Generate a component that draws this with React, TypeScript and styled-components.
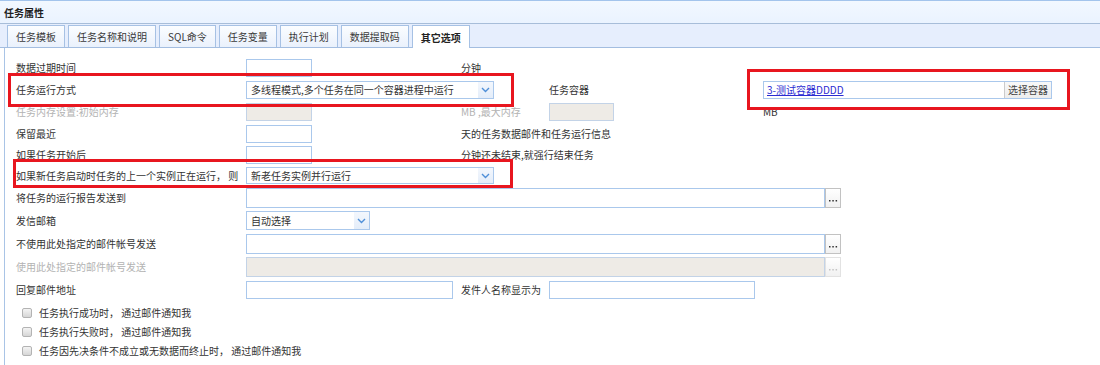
import React from 'react'
import styled, { createGlobalStyle } from 'styled-components'

const GlobalStyle = createGlobalStyle`
  html, body {
    margin: 0;
    padding: 0;
    background: #fff;
  }
  body {
    font-family: "Noto Sans CJK SC", "Noto Sans", sans-serif;
    font-size: 10px;
    color: #333;
  }
`

const tabs = ['任务模板', '任务名称和说明', 'SQL命令', '任务变量', '执行计划', '数据提取码', '其它选项']

const Panel = styled.div`
    position: relative;
    width: 1100px;
    height: 365px;
    overflow: hidden;
`

const Header = styled.div`
    height: 22px;
    border-top: 1px solid #a3c4ec;
    border-bottom: 1px solid #a7bdd9;
    background: linear-gradient(#f2f8ff, #eaf3ff);
    display: flex;
    align-items: center;
    padding-left: 4px;
    font-weight: bold;
    color: #1f1f1f;
`

const TabStrip = styled.div`
    display: flex;
    align-items: flex-start;
    gap: 3px;
    height: 22px;
    padding: 1px 0 0 7px;
    background: #e6eefd;
    border-bottom: 1px solid #a3bde0;
`

const Tab = styled.div<{ $active?: boolean }>`
    box-sizing: border-box;
    height: ${p => (p.$active ? 23 : 22)}px;
    padding: 0 8px;
    display: flex;
    align-items: center;
    border: 1px solid #a6c1e4;
    border-bottom: none;
    background: ${p => (p.$active ? '#fff' : 'linear-gradient(#fbfdff, #eaf1fc)')};
    font-weight: ${p => (p.$active ? 'bold' : 'normal')};
    color: ${p => (p.$active ? '#222' : '#3a3a3a')};
    white-space: nowrap;
`

const Content = styled.div`
    margin-left: 4px;
    border-left: 1px solid #a9c4e6;
    padding: 9px 0 0 11px;
    height: 308px;
`

const FormRow = styled.div<{ $h: number }>`
    display: grid;
    grid-template-columns: 230px 215px 88px 214px 1fr;
    height: ${p => p.$h}px;
    align-items: center;
    white-space: nowrap;
    line-height: 1;
`

const Cell = styled.div<{ $from: number; $span?: number }>`
    grid-column: ${p => p.$from} / span ${p => p.$span ?? 1};
    display: flex;
    align-items: center;
`

const Label = styled.span<{ $disabled?: boolean }>`
    color: ${p => (p.$disabled ? '#b3b3b3' : '#333')};
`

const TextBox = styled.input<{ $w: number; $h?: number }>`
    box-sizing: border-box;
    width: ${p => p.$w}px;
    height: ${p => p.$h ?? 18}px;
    margin: 0;
    padding: 0 3px;
    border: 1px solid #aac8ec;
    border-radius: 0;
    outline: none;
    background: #fff;
    font: inherit;

    &:disabled {
        background: #eeebe6;
        border-color: #c3d3e7;
    }
`

const SelectBox = styled.div<{ $w: number; $h?: number }>`
    box-sizing: border-box;
    width: ${p => p.$w}px;
    height: ${p => p.$h ?? 18}px;
    display: flex;
    align-items: stretch;
    border: 1px solid #aac8ec;
    background: #fff;
`

const SelectValue = styled.span`
    flex: 1;
    display: flex;
    align-items: center;
    padding-left: 4px;
    color: #333;
`

const SelectArrow = styled.span`
    width: 15px;
    display: flex;
    align-items: center;
    justify-content: center;
    background: linear-gradient(#f3f7fd, #e4edf9);
`

const PickerGroup = styled.div`
    display: flex;
    align-items: stretch;
    height: 20px;
`

const PickButton = styled.span<{ $disabled?: boolean }>`
    box-sizing: border-box;
    width: 16px;
    display: flex;
    align-items: flex-end;
    justify-content: center;
    padding-bottom: 5px;
    border: 1px solid ${p => (p.$disabled ? '#e2e2e2' : '#c2c2c2')};
    background: linear-gradient(#ffffff, #f1f1f1);
    color: ${p => (p.$disabled ? '#c4c4c4' : '#333')};
`

const ContainerField = styled.div`
    box-sizing: border-box;
    width: 289px;
    height: 18px;
    display: flex;
    align-items: stretch;
    border: 1px solid #aac8ec;
    background: #fff;
`

const ContainerLink = styled.a`
    flex: 1;
    display: flex;
    align-items: center;
    padding-left: 3px;
    color: #2c2cd2;
    text-decoration: underline;
`

const ContainerButton = styled.span`
    width: 46px;
    display: flex;
    align-items: center;
    justify-content: center;
    border-left: 1px solid #cbcbcb;
    background: linear-gradient(#f8f8f8, #ededed);
    color: #444;
`

const CheckList = styled.div`
    padding: 2px 0 0 6px;
`

const CheckRow = styled.label`
    display: flex;
    align-items: center;
    gap: 7px;
    height: 19px;
    line-height: 1;
`

const CheckMark = styled.span`
    box-sizing: border-box;
    width: 10px;
    height: 10px;
    border: 1px solid #b3b3b3;
    border-radius: 2px;
    background: linear-gradient(#f4f4f4, #d6d6d6);
`

const Annotation = styled.div<{ $x: number; $y: number; $w: number; $h: number }>`
    position: absolute;
    left: ${p => p.$x}px;
    top: ${p => p.$y}px;
    width: ${p => p.$w}px;
    height: ${p => p.$h}px;
    box-sizing: border-box;
    border: 3px solid #e8161f;
    pointer-events: none;
`

const Chevron = () => (
    <svg width="9" height="6" viewBox="0 0 9 6">
        <polyline points="1,1 4.5,4.5 8,1" fill="none" stroke="#4f8fd8" strokeWidth="1.4" />
    </svg>
)

const Dots = () => (
    <svg width="10" height="2" viewBox="0 0 10 2">
        <rect x="1" y="0" width="1.5" height="1.5" fill="currentColor" />
        <rect x="4.3" y="0" width="1.5" height="1.5" fill="currentColor" />
        <rect x="7.6" y="0" width="1.5" height="1.5" fill="currentColor" />
    </svg>
)

const Select = ({ value, width, height }: { value: string; width: number; height?: number }) => (
    <SelectBox $w={width} $h={height}>
        <SelectValue>{value}</SelectValue>
        <SelectArrow><Chevron /></SelectArrow>
    </SelectBox>
)

const Picker = ({ disabled }: { disabled?: boolean }) => (
    <PickerGroup>
        <TextBox $w={579} $h={20} disabled={disabled} />
        <PickButton $disabled={disabled}><Dots /></PickButton>
    </PickerGroup>
)

const App = () => {
    return (
        <Panel>
            <GlobalStyle />
            <Header>任务属性</Header>
            <TabStrip>
                {tabs.map((t, i) => (
                    <Tab key={t} $active={i === tabs.length - 1}>{t}</Tab>
                ))}
            </TabStrip>
            <Content>
                <FormRow $h={22}>
                    <Cell $from={1}><Label>数据过期时间</Label></Cell>
                    <Cell $from={2}><TextBox $w={66} /></Cell>
                    <Cell $from={3}><Label>分钟</Label></Cell>
                </FormRow>
                <FormRow $h={22}>
                    <Cell $from={1}><Label>任务运行方式</Label></Cell>
                    <Cell $from={2} $span={2}><Select value="多线程模式,多个任务在同一个容器进程中运行" width={248} /></Cell>
                    <Cell $from={4}><Label>任务容器</Label></Cell>
                    <Cell $from={5}>
                        <ContainerField>
                            <ContainerLink>3-测试容器DDDD</ContainerLink>
                            <ContainerButton>选择容器</ContainerButton>
                        </ContainerField>
                    </Cell>
                </FormRow>
                <FormRow $h={22}>
                    <Cell $from={1}><Label $disabled>任务内存设置:初始内存</Label></Cell>
                    <Cell $from={2}><TextBox $w={66} disabled /></Cell>
                    <Cell $from={3}><Label $disabled>MB ,最大内存</Label></Cell>
                    <Cell $from={4}><TextBox $w={65} disabled /></Cell>
                    <Cell $from={5}><Label>MB</Label></Cell>
                </FormRow>
                <FormRow $h={21}>
                    <Cell $from={1}><Label>保留最近</Label></Cell>
                    <Cell $from={2}><TextBox $w={66} /></Cell>
                    <Cell $from={3} $span={3}><Label>天的任务数据邮件和任务运行信息</Label></Cell>
                </FormRow>
                <FormRow $h={21}>
                    <Cell $from={1}><Label>如果任务开始后</Label></Cell>
                    <Cell $from={2}><TextBox $w={66} /></Cell>
                    <Cell $from={3} $span={3}><Label>分钟还未结束,就强行结束任务</Label></Cell>
                </FormRow>
                <FormRow $h={21}>
                    <Cell $from={1}><Label>如果新任务启动时任务的上一个实例正在运行， 则</Label></Cell>
                    <Cell $from={2} $span={2}><Select value="新老任务实例并行运行" width={248} height={17} /></Cell>
                </FormRow>
                <FormRow $h={23}>
                    <Cell $from={1}><Label>将任务的运行报告发送到</Label></Cell>
                    <Cell $from={2} $span={4}><Picker /></Cell>
                </FormRow>
                <FormRow $h={23}>
                    <Cell $from={1}><Label>发信邮箱</Label></Cell>
                    <Cell $from={2}><Select value="自动选择" width={124} height={19} /></Cell>
                </FormRow>
                <FormRow $h={23}>
                    <Cell $from={1}><Label>不使用此处指定的邮件帐号发送</Label></Cell>
                    <Cell $from={2} $span={4}><Picker /></Cell>
                </FormRow>
                <FormRow $h={23}>
                    <Cell $from={1}><Label $disabled>使用此处指定的邮件帐号发送</Label></Cell>
                    <Cell $from={2} $span={4}><Picker disabled /></Cell>
                </FormRow>
                <FormRow $h={23}>
                    <Cell $from={1}><Label>回复邮件地址</Label></Cell>
                    <Cell $from={2}><TextBox $w={207} /></Cell>
                    <Cell $from={3}><Label>发件人名称显示为</Label></Cell>
                    <Cell $from={4}><TextBox $w={206} /></Cell>
                </FormRow>
                <CheckList>
                    <CheckRow><CheckMark />任务执行成功时， 通过邮件通知我</CheckRow>
                    <CheckRow><CheckMark />任务执行失败时， 通过邮件通知我</CheckRow>
                    <CheckRow><CheckMark />任务因先决条件不成立或无数据而终止时， 通过邮件通知我</CheckRow>
                </CheckList>
            </Content>
            <Annotation $x={8} $y={73} $w={506} $h={34} />
            <Annotation $x={747} $y={69} $w={323} $h={41} />
            <Annotation $x={13} $y={159} $w={500} $h={29} />
        </Panel>
    )
}

export default App
